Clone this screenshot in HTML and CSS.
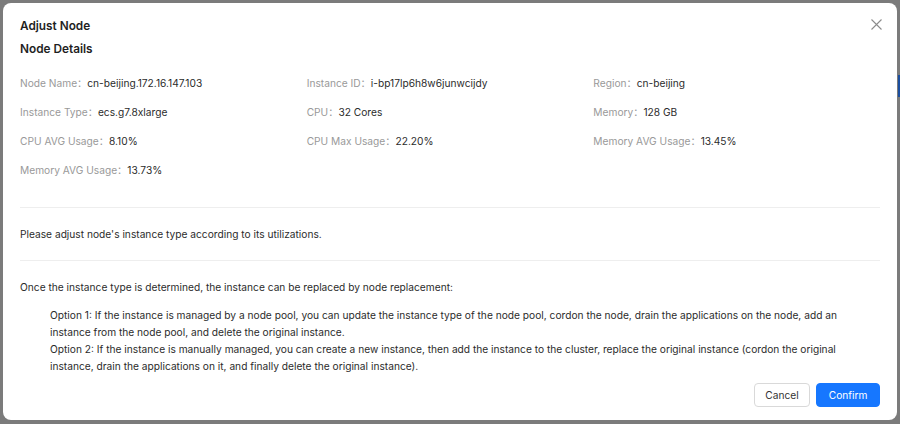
FILE: index.html
```html
<!DOCTYPE html>
<html>
<head>
<meta charset="utf-8">
<link rel="stylesheet" href="styles.css">
</head>
<body>
<div class="backdrop">
  <div class="side-mark"></div>
  <div class="dialog">
    <button class="close" aria-label="Close">
      <svg width="11" height="11" viewBox="0 0 11 11"><path d="M0.5 0.5L10.5 10.5M10.5 0.5L0.5 10.5" stroke="#8c8c8c" stroke-width="1.1" fill="none"/></svg>
    </button>
    <div class="title">Adjust Node</div>
    <div class="subtitle">Node Details</div>
    <div class="details">
      <div class="item"><span class="label">Node Name：</span><span class="value">cn-beijing.172.16.147.103</span></div>
      <div class="item"><span class="label">Instance ID：</span><span class="value">i-bp17lp6h8w6junwcijdy</span></div>
      <div class="item"><span class="label">Region：</span><span class="value">cn-beijing</span></div>
      <div class="item"><span class="label">Instance Type：</span><span class="value">ecs.g7.8xlarge</span></div>
      <div class="item"><span class="label">CPU：</span><span class="value">32 Cores</span></div>
      <div class="item"><span class="label">Memory：</span><span class="value">128 GB</span></div>
      <div class="item"><span class="label">CPU AVG Usage：</span><span class="value">8.10%</span></div>
      <div class="item"><span class="label">CPU Max Usage：</span><span class="value">22.20%</span></div>
      <div class="item"><span class="label">Memory AVG Usage：</span><span class="value">13.45%</span></div>
      <div class="item"><span class="label">Memory AVG Usage：</span><span class="value">13.73%</span></div>
    </div>
    <div class="divider"></div>
    <p class="text">Please adjust node's instance type according to its utilizations.</p>
    <div class="divider"></div>
    <p class="text">Once the instance type is determined, the instance can be replaced by node replacement:</p>
    <div class="options">
      <p>Option 1: If the instance is managed by a node pool, you can update the instance type of the node pool, cordon the node, drain the applications on the node, add an instance from the node pool, and delete the original instance.</p>
      <p>Option 2: If the instance is manually managed, you can create a new instance, then add the instance to the cluster, replace the original instance (cordon the original instance, drain the applications on it, and finally delete the original instance).</p>
    </div>
    <div class="footer">
      <button class="btn">Cancel</button>
      <button class="btn primary">Confirm</button>
    </div>
  </div>
</div>
</body>
</html>
```
FILE: styles.css
```css
* { box-sizing: border-box; }
html, body { margin: 0; padding: 0; }
body {
  width: 900px;
  height: 424px;
  overflow: hidden;
  background: #7b7b7b;
  font-family: Inter, "Noto Sans", "Noto Sans CJK SC", sans-serif;
  color: #333;
}
.backdrop {
  position: relative;
  padding: 3px 3px 4px 3px;
  height: 424px;
}
.side-mark {
  position: absolute;
  right: 0;
  top: 75px;
  width: 2px;
  height: 22px;
  background: #1b4fa0;
}
.dialog {
  position: relative;
  background: #fff;
  border-radius: 8px;
  height: 417px;
  padding: 13px 17px 13px 17px;
  display: flex;
  flex-direction: column;
}
.close {
  position: absolute;
  top: 14px;
  right: 13px;
  width: 15px;
  height: 15px;
  padding: 0;
  border: 0;
  background: none;
  display: flex;
  align-items: center;
  justify-content: center;
}
.title,
.subtitle {
  font-size: 11.8px;
  font-weight: 600;
  line-height: 20px;
  color: #1f1f1f;
}
.subtitle { margin-top: 3px; }
.details {
  margin-top: 9px;
  display: grid;
  grid-template-columns: repeat(3, 1fr);
  grid-auto-rows: 29px;
  font-size: 10.2px;
}
.item {
  display: flex;
  align-items: center;
  white-space: nowrap;
}
.label { color: #999; }
.value { color: #2b2b2b; }
.divider {
  height: 1px;
  background: #eee;
}
.details + .divider { margin-top: 23px; }
.text {
  margin: 17px 0;
  font-size: 10.2px;
  line-height: 18px;
  color: #2b2b2b;
}
.divider + .text + .divider + .text { margin-bottom: 0; }
.options {
  margin-top: 11px;
  padding-left: 30px;
  font-size: 10.2px;
  line-height: 17px;
  color: #2b2b2b;
}
.options p { margin: 0; }
.footer {
  margin-top: auto;
  display: flex;
  justify-content: flex-end;
  gap: 6px;
}
.btn {
  height: 24px;
  padding: 0 10.5px;
  border: 1px solid #d9d9d9;
  border-radius: 4px;
  background: #fff;
  font-family: inherit;
  font-size: 10.2px;
  color: #333;
}
.btn.primary {
  padding: 0 11.5px;
  background: #1677ff;
  border-color: #1677ff;
  color: #fff;
}
```
